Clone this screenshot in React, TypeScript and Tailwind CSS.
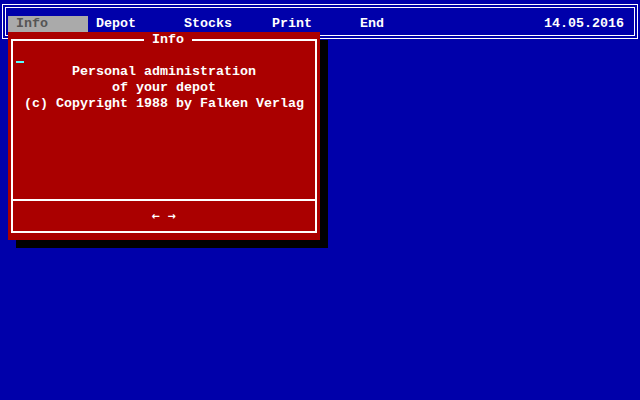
import React from 'react';

const menu = ['Depot', 'Stocks', 'Print', 'End'];

export default function App() {
    return (
        <div className="relative w-[640px] h-[400px] overflow-hidden bg-[#0000aa] text-white font-bold text-[13.333px] leading-[16px] font-['Liberation_Mono','DejaVu_Sans_Mono',monospace]">
            {/* menu bar, double frame */}
            <div className="ml-[2px] mt-[4px] w-[636px] h-[35px] border border-white p-[2px]">
                <div className="h-full border border-white pt-[8px]">
                    <div className="flex h-[16px] whitespace-pre">
                        <div className="ml-[2px] w-[80px] pl-[8px] bg-[#aaaaaa] text-[#555555]">Info</div>
                        <div className="ml-[8px] flex">
                            {menu.map((m) => (
                                <div key={m} className="w-[88px]">{m}</div>
                            ))}
                        </div>
                        <div className="ml-auto mr-[10px]">14.05.2016</div>
                    </div>
                </div>
            </div>

            {/* Info window */}
            <div className="absolute left-[8px] top-[32px] w-[312px] h-[208px] bg-[#aa0000] shadow-[8px_8px_0_#000] pt-[7px] pb-[7px] px-[3px]">
                <div className="absolute left-[136px] top-0 h-[16px] px-[8px] bg-[#aa0000]">Info</div>
                <div className="h-full border-2 border-white flex flex-col">
                    <div className="h-[158px] pt-[7px]">
                        <div className="h-[16px] pl-[3px] pt-[13px]">
                            <div className="w-[8px] h-[2px] bg-[#55ffff]" />
                        </div>
                        <div className="text-center whitespace-pre">
                            <div>Personal administration</div>
                            <div>of your depot</div>
                            <div>(c) Copyright 1988 by Falken Verlag</div>
                        </div>
                    </div>
                    <div className="flex-1 border-t-2 border-white flex items-center justify-center whitespace-pre font-['DejaVu_Sans_Mono',monospace] text-[13.3px]">
                        ← →
                    </div>
                </div>
            </div>
        </div>
    );
}
